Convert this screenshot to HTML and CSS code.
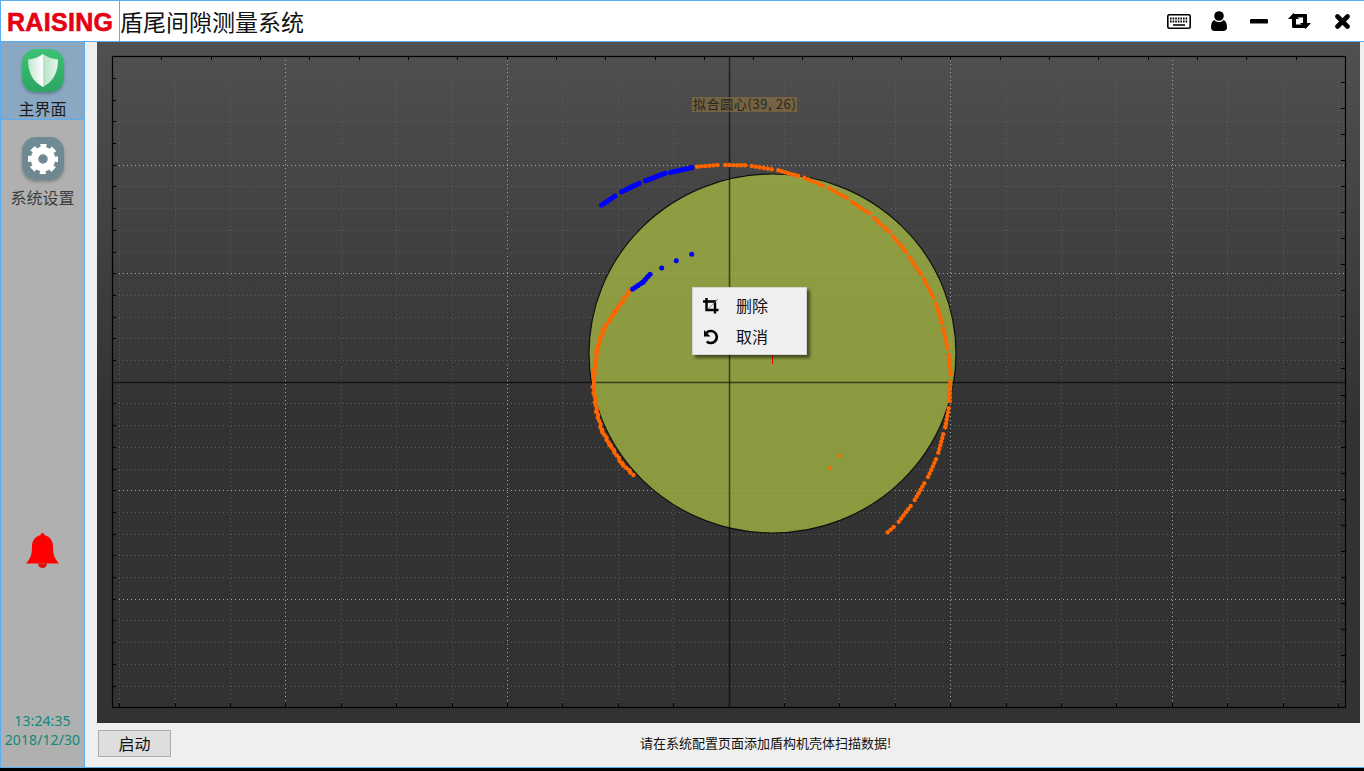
FILE: index.html
```html
<!DOCTYPE html>
<html lang="zh-CN">
<head>
    <meta charset="UTF-8">
    <meta name="viewport" content="width=device-width, initial-scale=1.0">
    <title>盾尾间隙测量系统</title>
    <link rel="stylesheet" href="styles.css">
</head>
<body>

<div class="app">
    <!-- Title bar -->
    <header class="titlebar">
        <div class="logo">RAISING</div>
        <h1 class="title">盾尾间隙测量系统</h1>
        <div class="win-buttons">
            <button class="win-btn">
                <svg width="24" height="15" viewBox="0 0 24 15">
                    <rect x="0.8" y="0.8" width="22.4" height="13.4" rx="1.5" fill="#fff" stroke="#000" stroke-width="1.6"/>
                    <path d="M3 4.5H21M3 7.5H21" stroke="#000" stroke-width="2" stroke-dasharray="1.6 1"/>
                    <path d="M6 11H18" stroke="#000" stroke-width="1.6"/>
                </svg>
            </button>
            <button class="win-btn">
                <svg width="16" height="20" viewBox="0 0 16 20">
                    <circle cx="8" cy="5" r="4.8"/>
                    <path d="M3.500 9C1 10 0 12.500 0 16.500C0 18.800 1.500 20 3.500 20H12.500C14.500 20 16 18.800 16 16.500C16 12.500 15 10 12.500 9C11.500 10.500 10 11 8 11C6 11 4.500 10.500 3.500 9Z"/>
                </svg>
            </button>
            <button class="win-btn">
                <svg width="18" height="5" viewBox="0 0 18 5"><rect width="18" height="4.600" rx="1.200"/></svg>
            </button>
            <button class="win-btn">
                <svg width="23" height="16" viewBox="0 0 23 16">
                    <path d="M5.500 0L11 6H8V11.500H14.500L18 15H5.200C4.500 15 4 14.500 4 13.800V6H0Z"/>
                    <path d="M17.500 16L12 10H15V4.500H8.500L5 1H17.800C18.500 1 19 1.500 19 2.200V10H23Z"/>
                </svg>
            </button>
            <button class="win-btn close">
                <svg width="15" height="15" viewBox="0 0 15 15">
                    <path d="M2.500 2.500L12.500 12.500M12.500 2.500L2.500 12.500" stroke="#000" stroke-width="4.600" stroke-linecap="round"/>
                </svg>
            </button>
        </div>
    </header>

    <div class="content">
        <!-- Left navigation -->
        <aside class="sidebar">
            <div class="nav-item active">
                <div class="nav-icon green">
                    <svg width="30" height="33" viewBox="0 0 30 33">
                        <defs>
                            <linearGradient id="shieldLeft"><stop offset="0" stop-color="#bfe6cd"/><stop offset="1" stop-color="#fff"/></linearGradient>
                            <linearGradient id="shieldRight"><stop offset="0" stop-color="#b5e2c6"/><stop offset="1" stop-color="#e6f6ec"/></linearGradient>
                        </defs>
                        <path d="M15 0C11 3 6 5 0 5.500C0 18 4 27 15 33Z" fill="url(#shieldLeft)"/>
                        <path d="M15 0C19 3 24 5 30 5.500C30 18 26 27 15 33Z" fill="url(#shieldRight)"/>
                    </svg>
                </div>
                <div class="nav-label">主界面</div>
            </div>
            <div class="nav-item">
                <div class="nav-icon slate">
                    <svg width="30" height="30" viewBox="0 0 30 30">
                        <circle cx="15" cy="15" r="8.500" fill="none" stroke="#fff" stroke-width="7.500"/>
                        <circle cx="15" cy="15" r="13" fill="none" stroke="#fff" stroke-width="4.400" stroke-dasharray="5.800 4.410" stroke-dashoffset="2.900"/>
                    </svg>
                </div>
                <div class="nav-label muted">系统设置</div>
            </div>
            <div class="alarm">
                <svg width="33" height="36" viewBox="0 0 33 36">
                    <path d="M16.500 0C17.800 0 18.600 1 18.600 2.300C24 3.500 27 8 27 13.500C27 21.500 28.500 25.500 33 30.500H0C4.500 25.500 6 21.500 6 13.500C6 8 9 3.500 14.400 2.300C14.400 1 15.200 0 16.500 0Z" fill="#f00"/>
                    <path d="M12 30.500A4.500 4.500 0 0 0 21 30.500Z" fill="#e01010"/>
                </svg>
            </div>
            <div class="clock">
                <div>13:24:35</div>
                <div>2018/12/30</div>
            </div>
        </aside>

        <main class="main">
            <div class="plot-panel">
                <svg id="plot" class="plot" width="1263" height="681" viewBox="97 42 1263 681"></svg>
                <div class="fit-label">拟合圆心(39, 26)</div>
                <!-- Context menu on the plot -->
                <div class="menu">
                    <div class="menu-row">
                        <svg width="16" height="16" viewBox="0 0 16 16">
                            <path d="M3.500 0V12H15.500M0 3.500H12V15.500" fill="none" stroke="#000" stroke-width="2.400"/>
                            <path d="M15 1L5 11" stroke="#777" stroke-width="0.800"/>
                        </svg>
                        <span>删除</span>
                    </div>
                    <div class="menu-row">
                        <svg width="16" height="16" viewBox="0 0 16 16">
                            <path d="M3.500 3.800A6 6 0 1 1 3.800 12.500" fill="none" stroke="#000" stroke-width="2.600"/>
                            <path d="M1 1V7.500H7.500Z"/>
                        </svg>
                        <span>取消</span>
                    </div>
                </div>
            </div>
            <footer class="statusbar">
                <button class="start-btn">启动</button>
                <div class="message">请在系统配置页面添加盾构机壳体扫描数据!</div>
            </footer>
        </main>
    </div>
</div>

<script src="chart.js"></script>

</body>
</html>
```

FILE: styles.css
```css
* {
    box-sizing: border-box;
}
html, body {
    height: 100%;
}
body {
    margin: 0;
    background-color: #000;
    overflow: hidden;
    font-family: "Noto Sans CJK SC", "Noto Sans", sans-serif;
}
.app {
    height: 768px;
    display: flex;
    flex-direction: column;
    background: #efefef;
    border-top: 1px solid #5aaef0;
    border-bottom: 1px solid #5aaef0;
    border-left: 1px solid #5aaef0;
}
.titlebar {
    height: 41px;
    flex: none;
    display: flex;
    align-items: center;
    background: #fff;
    border-bottom: 1px solid #5aaef0;
}
.logo {
    width: 119px;
    height: 40px;
    padding-left: 6px;
    border-right: 1px solid #5aaef0;
    font-family: "Liberation Sans", Arial, sans-serif;
    font-weight: bold;
    font-size: 25px;
    line-height: 42px;
    letter-spacing: 0.3px;
    color: #e60012;
    -webkit-text-stroke: 0.6px #e60012;
}
.title {
    margin: 0;
    font-size: 23px;
    font-weight: normal;
    line-height: 40px;
    color: #111;
}
.win-buttons {
    margin-left: auto;
    padding-right: 2px;
    display: flex;
}
.win-btn {
    width: 40px;
    height: 40px;
    padding: 0;
    border: none;
    background: none;
    display: flex;
    align-items: center;
    justify-content: center;
}
.win-btn.close {
    margin-left: 3px;
}
.content {
    flex: 1;
    display: flex;
    min-height: 0;
}
.sidebar {
    width: 84px;
    flex: none;
    display: flex;
    flex-direction: column;
    align-items: center;
    background: #b0b0b0;
    border-right: 1px solid #5aaef0;
}
.nav-item {
    width: 100%;
    padding-top: 17px;
    display: flex;
    flex-direction: column;
    align-items: center;
}
.nav-item.active {
    height: 78px;
    padding-top: 7px;
    background: #8ba8c2;
    border-bottom: 1px solid #5aaef0;
}
.nav-icon {
    width: 42px;
    height: 43px;
    border-radius: 14px;
    display: flex;
    align-items: center;
    justify-content: center;
    box-shadow: 0 2px 3px rgba(0, 0, 0, 0.25);
}
.nav-icon.green {
    background: linear-gradient(#3cc274, #2ba662);
}
.nav-icon.slate {
    background: linear-gradient(#6f8b95, #70878f);
}
.nav-label {
    margin-top: 7px;
    font-size: 16px;
    line-height: 18px;
    white-space: nowrap;
    color: #1c1c1c;
}
.nav-label.muted {
    margin-top: 8px;
    color: #3c3c3c;
}
.alarm {
    margin-top: 327px;
    height: 36px;
}
.clock {
    margin-top: auto;
    padding-bottom: 18px;
    font-family: "Noto Sans", sans-serif;
    font-size: 14px;
    line-height: 19px;
    letter-spacing: 0.1px;
    text-align: center;
    color: #10887a;
}
.main {
    flex: 1;
    min-width: 0;
    padding: 0 4px 0 12px;
    display: flex;
    flex-direction: column;
}
.plot-panel {
    position: relative;
    height: 681px;
    flex: none;
    background: linear-gradient(#505050, #323232 56%, #323232);
}
.plot {
    display: block;
}
.fit-label {
    position: absolute;
    left: 595px;
    top: 55px;
    height: 15px;
    padding: 0 1px;
    font-size: 13px;
    line-height: 14px;
    letter-spacing: 0.6px;
    white-space: nowrap;
    color: #262626;
    background: rgba(175, 130, 55, 0.42);
}
.menu {
    position: absolute;
    left: 595px;
    top: 245px;
    width: 115px;
    height: 68px;
    padding: 1px 0;
    background: #efefef;
    border: 1px solid #d4d4d4;
    box-shadow: 3px 3px 3px rgba(0, 0, 0, 0.5);
}
.menu-row {
    height: 31px;
    padding-left: 10px;
    display: flex;
    align-items: center;
    font-size: 16px;
    color: #111;
}
.menu-row svg {
    margin-top: 2px;
}
.menu-row span {
    margin-left: 17px;
}
.statusbar {
    flex: 1;
    padding: 7px 0 0 1px;
    display: flex;
    align-items: flex-start;
}
.start-btn {
    width: 73px;
    height: 27px;
    padding: 0 0 2px;
    background: #dedede;
    border: 1px solid #adadad;
    font-family: inherit;
    font-size: 16px;
    line-height: 22px;
    color: #111;
}
.message {
    flex: 1;
    font-size: 13px;
    line-height: 25px;
    text-align: center;
    color: #111;
}
```

FILE: chart.js
```js
const svgNS = "http://www.w3.org/2000/svg";
const plot = document.getElementById("plot");

// plot frame, in page pixels (the viewBox matches the page)
const left = 112, right = 1345, top_ = 56, bottom = 707;
const gridX = 728.5, gridY = 381.7;
const stepX = 55.4, stepY = 21.7;

function add(tag, attrs) {
    const el = document.createElementNS(svgNS, tag);
    for (const k in attrs) el.setAttribute(k, attrs[k]);
    plot.appendChild(el);
    return el;
}

function line(x1, y1, x2, y2, stroke, extra) {
    return add("line", Object.assign({ x1, y1, x2, y2, stroke }, extra));
}

// grid
for (let i = -11; i <= 11; i++) {
    if (i === 0) continue;
    const x = Math.round(gridX + i * stepX) + 0.5;
    const major = i % 4 === 0;
    line(x, major ? top_ : 78, x, bottom, major ? "#a8a8a8" : "#5c5c5c", { "stroke-dasharray": major ? "1 3" : "1 3" });
    line(x, bottom - 4, x, bottom, "#000");
}
for (let i = -14; i <= 14; i++) {
    if (i === 0) continue;
    const y = Math.round(gridY + i * stepY) + 0.5;
    const major = i % 5 === 0;
    line(left + 7, y, right, y, major ? "#a8a8a8" : "#5c5c5c", { "stroke-dasharray": major ? "1 3" : "1 3" });
    line(left, y, left + 4, y, "#000");
}

// top and right axis ticks
for (let i = 1; i < 25; i++) {
    const x = Math.round(left + i * 49.32) + 0.5;
    line(x, top_, x, top_ + 4, "#000");
    const y = Math.round(top_ + i * 26.04) + 0.5;
    line(right - 4, y, right, y, "#000");
}

// fitted circle
add("ellipse", { cx: 772.5, cy: 353.5, rx: 183.5, ry: 179.5, fill: "rgba(161,179,66,0.8)", stroke: "#111", "stroke-width": 1.2 });
line(772.5, 340, 772.5, 364, "#f00");

// axes
line(729.5, top_, 729.5, bottom, "rgba(0,0,0,0.6)", { "stroke-width": 1.5 });
line(left, 382.5, right, 382.5, "rgba(0,0,0,0.6)", { "stroke-width": 1.5 });

// frame
add("rect", { x: left + 0.5, y: top_ + 0.5, width: right - left, height: bottom - top_, fill: "none", stroke: "#000", "stroke-width": 1.2 });

// scan points, runs of dots between the waypoints
function dots(points, spacing, r, color, jitter) {
    let k = 0;
    for (let i = 0; i < points.length - 1; i++) {
        const [x1, y1] = points[i], [x2, y2] = points[i + 1];
        const n = Math.max(1, Math.round(Math.hypot(x2 - x1, y2 - y1) / spacing));
        for (let j = 0; j <= n; j++) {
            const off = jitter ? (k++ % 3 - 1) * jitter : 0;
            add("circle", { cx: x1 + (x2 - x1) * j / n + off, cy: y1 + (y2 - y1) * j / n, r, fill: color });
        }
    }
}

const orange = "#ff6600", blue = "#0000ff";

const orangeRuns = [
    [[697.3, 166.7], [717.3, 165]],
    [[725.3, 165], [745, 165.3]],
    [[751.7, 166], [771.7, 169.3]],
    [[778.3, 170.3], [798.3, 176]],
    [[804.3, 177.7], [822.7, 185.7]],
    [[829.3, 188.3], [846.7, 198.3]],
    [[852.3, 202.3], [869, 213.3]],
    [[874.3, 218.3], [889, 231.7]],
    [[893.3, 236.7], [906, 251.7]],
    [[910, 257.3], [920.7, 274.3]],
    [[924.3, 279.3], [933.3, 297.3]],
    [[936, 304], [941.7, 322.7]],
    [[943.3, 329], [947.7, 348]],
    [[948.7, 355], [950.7, 374.3]],
    [[950.3, 381.7], [949.7, 401]],
    [[948.7, 408.3], [945.3, 427.3]],
    [[943.3, 434.3], [938.3, 452.7]],
    [[936, 459.3], [928, 477]],
    [[924.3, 483.3], [914.7, 500]],
    [[910.7, 506], [898.7, 521.7]],
    [[893.7, 527], [887.7, 532.3]]
];
orangeRuns.forEach(run => dots(run, 3.7, 2.2, orange));

dots([[630, 290.7], [615, 311.7], [603.3, 330], [596.7, 351.7], [594, 373.3], [593.3, 386.7],
      [596.7, 411.7], [601.7, 430], [610, 445], [621.7, 463.3], [633.3, 475]], 3, 2.2, orange, 0.6);

add("circle", { cx: 840.3, cy: 455.7, r: 2, fill: orange });
add("circle", { cx: 830.3, cy: 468.3, r: 2, fill: orange });

const blueRuns = [
    [[601.7, 205], [615, 196]],
    [[621.7, 191.7], [639.3, 183.3]],
    [[645.7, 180.7], [665, 173.3]],
    [[670.7, 172.3], [691.7, 167.7]],
    [[632.7, 289], [643, 282], [650, 274.3]]
];
blueRuns.forEach(run => dots(run, 3, 2.6, blue));
[[661.7, 268], [676.3, 260.7], [691.7, 254.3]].forEach(([cx, cy]) => add("circle", { cx, cy, r: 2.5, fill: blue }));
```
